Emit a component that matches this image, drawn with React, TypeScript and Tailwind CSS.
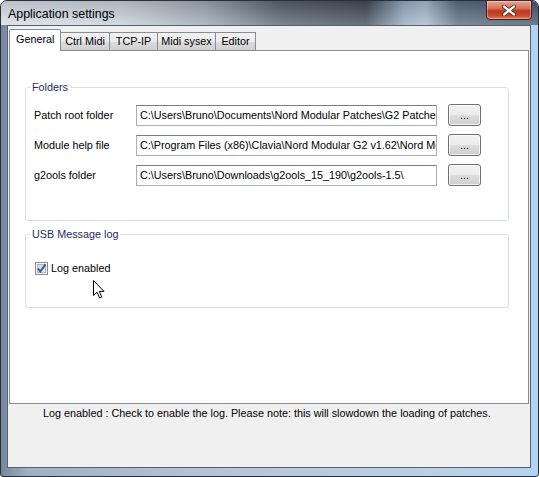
import React from 'react'

const FONT = { fontFamily: '"Liberation Sans", Arial, sans-serif' }

const TABS = [
  { name: 'General', w: 'w-[52px]' },
  { name: 'Ctrl Midi', w: 'w-[50px]' },
  { name: 'TCP-IP', w: 'w-[49px]' },
  { name: 'Midi sysex', w: 'w-[59px]' },
  { name: 'Editor', w: 'w-[41px]' },
]

const FOLDERS = [
  { label: 'Patch root folder', value: 'C:\\Users\\Bruno\\Documents\\Nord Modular Patches\\G2 Patches\\' },
  { label: 'Module help file', value: 'C:\\Program Files (x86)\\Clavia\\Nord Modular G2 v1.62\\Nord Modular G2 Help.pdf' },
  { label: 'g2ools folder', value: 'C:\\Users\\Bruno\\Downloads\\g2ools_15_190\\g2ools-1.5\\' },
]

function CloseButton() {
  return (
    <div className="-mt-px self-start w-[46px] h-[20px] rounded-b-[4px] border border-[#4b1f16] bg-[linear-gradient(180deg,#e8a690_0%,#d8735a_40%,#b8391f_55%,#c9492d_80%,#e07a55_100%)] flex items-center justify-center shadow-[inset_0_0_0_1px_rgba(255,255,255,0.35)]">
      <svg width="14" height="11" viewBox="0 0 14 11">
        <path d="M2 1.5 L12 9.5 M12 1.5 L2 9.5" stroke="#3a1a12" strokeWidth="4" strokeLinecap="round" />
        <path d="M2 1.5 L12 9.5 M12 1.5 L2 9.5" stroke="#ffffff" strokeWidth="2.4" strokeLinecap="round" />
      </svg>
    </div>
  )
}

function Checkbox() {
  return (
    <svg width="13" height="13" viewBox="0 0 13 13" className="shrink-0">
      <defs>
        <linearGradient id="cb" x1="0" y1="0" x2="1" y2="1">
          <stop offset="0" stopColor="#cbcfd5" />
          <stop offset="1" stopColor="#f6f6f6" />
        </linearGradient>
      </defs>
      <rect x="0.5" y="0.5" width="12" height="12" fill="#f4f4f4" stroke="#8e8f8f" />
      <rect x="2.5" y="2.5" width="8" height="8" fill="url(#cb)" stroke="#b3b6bb" />
      <path d="M3 6.5 L5.3 9.5 L10.5 2.3" fill="none" stroke="#3a55b8" strokeWidth="2" />
    </svg>
  )
}

function Cursor() {
  return (
    <svg width="12" height="19" viewBox="0 0 12 19" className="absolute left-[83px] top-[229px]">
      <path d="M0.5 0.5 L0.5 15.5 L4 12.2 L6.6 18 L8.8 17 L6.3 11.4 L11 11.4 Z" fill="#ffffff" stroke="#000000" strokeWidth="1" strokeLinejoin="miter" />
    </svg>
  )
}

function Group({ title, className, children }: { title: string; className: string; children: React.ReactNode }) {
  return (
    <fieldset className={`border border-[#d5dfe5] rounded-[3px] ${className}`}>
      <legend className="ml-[4px] px-[2px] text-[10.8px] leading-[13px] text-[#1e2b66]">{title}</legend>
      {children}
    </fieldset>
  )
}

export default function App() {
  return (
    <div style={FONT} className="w-[539px] h-[477px] overflow-hidden border border-[#2b3038] rounded-t-[7px] rounded-b-[3px] flex flex-col bg-[linear-gradient(90deg,#76879b_0%,#9fb0c3_5%,#b6c5d6_40%,#bccfe3_80%,#b3d2f2_100%)] text-[10.8px] text-black">
      {/* Title bar */}
      <div className="h-[24px] flex items-start justify-between pl-[7px] pr-[6px] bg-[linear-gradient(180deg,rgba(0,0,0,0.12)_0%,rgba(255,255,255,0.22)_100%),linear-gradient(90deg,#d6dde4_0%,#c6cfd8_22%,#9aa6b3_38%,#56626f_52%,#3e4956_68%,#93a8bf_75%,#a6b9cd_79%,#5a6a7e_85%,#48566a_100%)]">
        <span className="pt-[6px] text-[12.4px] leading-[15px] text-black">Application settings</span>
        <CloseButton />
      </div>

      {/* Client area */}
      <div className="ml-[6px] mr-[7px] h-[443px] border border-[#55606c] bg-[#f0f0f0] flex flex-col">
        <div className="h-[24px] flex items-end pl-[1px]">
          {TABS.map((t, i) =>
            i === 0 ? (
              <div key={t.name} className={`${t.w} h-[22px] -mb-px relative z-10 bg-white border border-b-0 border-[#898c95] rounded-t-[2px] pl-[6px] pt-[3px] leading-[13px]`}>
                {t.name}
              </div>
            ) : (
              <div key={t.name} className={`${t.w} -ml-px h-[18px] bg-[linear-gradient(180deg,#f2f2f2_0%,#ebebeb_50%,#dddddd_51%,#cfcfcf_100%)] border border-b-0 border-[#898c95] text-center pt-[2px] leading-[13px]`}>
                {t.name}
              </div>
            ),
          )}
        </div>

        {/* Tab page */}
        <div className="ml-[1px] w-[520px] h-[354px] border border-[#898c95] bg-white relative flex flex-col">
          <Group title="Folders" className="mt-[30px] ml-[15px] w-[484px] h-[140px]">
            <div className="mt-[10px] flex flex-col gap-[8px] pl-[8px]">
              {FOLDERS.map((f) => (
                <div key={f.label} className="flex items-center h-[22px]">
                  <span className="w-[102px] shrink-0">{f.label}</span>
                  <div className="w-[301px] h-[21px] border border-[#abadb3] border-t-[#7a7c83] bg-white overflow-hidden whitespace-nowrap pl-[3px] leading-[19px]">
                    {f.value}
                  </div>
                  <button className="ml-[11px] w-[33px] h-[22px] rounded-[3px] border border-[#707070] bg-[linear-gradient(180deg,#f2f2f2_0%,#ebebeb_50%,#dddddd_51%,#cfcfcf_100%)] shadow-[inset_0_0_0_1px_rgba(255,255,255,0.7)] text-[11px] leading-[16px] text-black">
                    ...
                  </button>
                </div>
              ))}
            </div>
          </Group>

          <Group title="USB Message log" className="mt-[7px] ml-[15px] w-[484px] h-[80px]">
            <div className="mt-[21px] pl-[9px] flex items-center gap-[3px]">
              <Checkbox />
              <span className="leading-[13px]">Log enabled</span>
            </div>
          </Group>

          <Cursor />
        </div>

        {/* Hint */}
        <div className="pl-[35px] pt-[3px] leading-[13px]">
          Log enabled : Check to enable the log. Please note: this will slowdown the loading of patches.
        </div>
      </div>
    </div>
  )
}
